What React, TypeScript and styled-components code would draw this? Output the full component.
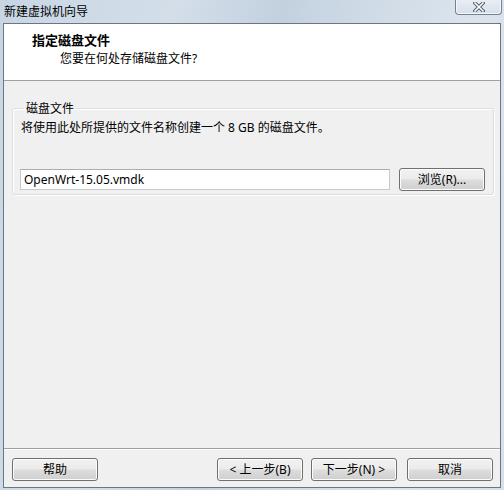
import React from "react";
import styled, { createGlobalStyle } from "styled-components";

const Global = createGlobalStyle`
  html, body { margin: 0; padding: 0; background: #c9d7e5; }
  body { font-family: "Noto Sans", "Noto Sans CJK SC", sans-serif; font-size: 12px; color: #000; }
  * { box-sizing: border-box; }
`;

const Window = styled.div`
  width: 504px;
  height: 490px;
  display: flex;
  flex-direction: column;
  background: linear-gradient(100deg, #c8d6e4 0%, #d3dee9 30%, #c3d1df 48%, #cdd9e5 60%, #dbe4ed 80%, #d6e0ea 100%);
  padding: 0 3px 2px 3px;
`;

const TitleBar = styled.div`
  height: 23px;
  display: flex;
  align-items: flex-start;
  flex-shrink: 0;
`;

const TitleText = styled.div`
  padding: 3px 0 0 1px;
  line-height: 16px;
  font-size: 12px;
  font-family: "Noto Sans CJK SC", sans-serif;
  color: #000;
`;

const CloseButton = styled.div`
  margin-left: auto;
  margin-right: -1px;
  width: 47px;
  height: 15px;
  border: 1px solid #74828f;
  border-top: none;
  border-radius: 0 0 4px 4px;
  background: linear-gradient(#e9eef4, #d6dfe9);
  box-shadow: inset 0 -1px 0 #f3f6fa, inset 1px 0 0 #f3f6fa, inset -1px 0 0 #f3f6fa;
  display: flex;
  align-items: center;
  justify-content: center;
`;

const Client = styled.div`
  flex: 1;
  display: flex;
  flex-direction: column;
  border: 1px solid #6a7683;
  background: #f0f0f0;
`;

const Header = styled.div`
  height: 57px;
  background: #fff;
  padding: 8px 0 0 28px;
  border-bottom: 1px solid #a0a0a0;
  flex-shrink: 0;
`;

const HeaderTitle = styled.div`
  font-family: "Noto Sans CJK SC", sans-serif;
  font-weight: bold;
  font-size: 13px;
  line-height: 16px;
`;

const HeaderSub = styled.div`
  font-family: "Noto Sans", "Noto Sans CJK SC", sans-serif;
  font-size: 12px;
  line-height: 16px;
  margin: 3px 0 0 28px;
`;

const Body = styled.div`
  flex: 1;
  padding: 19px 7px 0 8px;
`;

const Group = styled.fieldset`
  margin: 0;
  border: 1px solid #d5dfe5;
  border-radius: 3px;
  box-shadow: inset 1px 1px 0 #fff, 1px 1px 0 #fff;
  padding: 4px 8px 3px 7px;
`;

const Legend = styled.legend`
  padding: 0 2px;
  margin-left: 4px;
  line-height: 16px;
  font-family: "Noto Sans CJK SC", sans-serif;
`;

const Info = styled.div`
  line-height: 16px;
  margin-left: 1px;
`;

const FileRow = styled.div`
  margin-top: 32px;
  display: flex;
  align-items: center;
  gap: 9px;
  height: 23px;
`;

const TextInput = styled.div`
  width: 370px;
  height: 21px;
  background: #fff;
  border: 1px solid #c5cad1;
  border-top-color: #abadb3;
  padding-left: 3px;
  line-height: 19px;
  font-size: 12px;
`;

const Button = styled.div<{ $w?: number }>`
  width: ${(p) => p.$w ?? 86}px;
  height: 23px;
  border: 1px solid #707070;
  border-radius: 3px;
  background: linear-gradient(#f2f2f2 0%, #ebebeb 48%, #dddddd 52%, #cfcfcf 100%);
  box-shadow: inset 0 0 0 1px #fcfcfc;
  display: flex;
  align-items: center;
  justify-content: center;
  font-size: 12px;
  line-height: 16px;
  white-space: pre;
  flex-shrink: 0;
`;

const Footer = styled.div`
  border-top: 1px solid #a0a0a0;
  box-shadow: inset 0 1px 0 #fff;
  padding: 9px 7px 6px 8px;
  display: flex;
  align-items: center;
  flex-shrink: 0;
`;

const NavGroup = styled.div`
  margin-left: auto;
  display: flex;
  align-items: center;
`;

const Gap = styled.div<{ $w: number }>`
  width: ${(p) => p.$w}px;
`;

export default function App() {
  return (
    <>
      <Global />
      <Window>
        <TitleBar>
          <TitleText>新建虚拟机向导</TitleText>
          <CloseButton>
            <svg width="12" height="10" viewBox="0 0 12 10">
              <path d="M2 1 L10 9 M10 1 L2 9" stroke="#4d5865" strokeWidth="3.4" strokeLinecap="square" />
              <path d="M2 1 L10 9 M10 1 L2 9" stroke="#ffffff" strokeWidth="1.6" strokeLinecap="square" />
            </svg>
          </CloseButton>
        </TitleBar>
        <Client>
          <Header>
            <HeaderTitle>指定磁盘文件</HeaderTitle>
            <HeaderSub>您要在何处存储磁盘文件?</HeaderSub>
          </Header>
          <Body>
            <Group>
              <Legend>磁盘文件</Legend>
              <Info>将使用此处所提供的文件名称创建一个 8 GB 的磁盘文件。</Info>
              <FileRow>
                <TextInput>OpenWrt-15.05.vmdk</TextInput>
                <Button>浏览(R)...</Button>
              </FileRow>
            </Group>
          </Body>
          <Footer>
            <Button>帮助</Button>
            <NavGroup>
              <Button>{"< 上一步(B)"}</Button>
              <Gap $w={8} />
              <Button>{"下一步(N) >"}</Button>
              <Gap $w={10} />
              <Button>取消</Button>
            </NavGroup>
          </Footer>
        </Client>
      </Window>
    </>
  );
}
